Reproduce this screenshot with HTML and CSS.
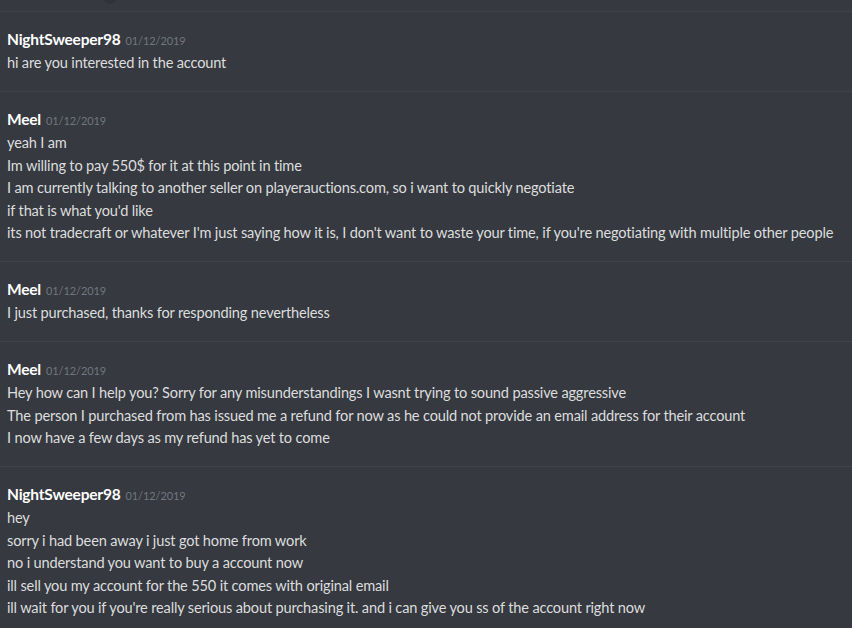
FILE: index.html
```html
<!DOCTYPE html>
<html lang="en">
<head>
<meta charset="utf-8">
<title>Chat</title>
<link rel="stylesheet" href="styles.css">
</head>
<body>
<div class="chat">
  <div class="top-fade"><span class="top-dot"></span></div>
  <div class="group">
    <div class="header"><span class="name">NightSweeper98</span><span class="time">01/12/2019</span></div>
    <div class="line">hi are you interested in the account</div>
  </div>
  <div class="group">
    <div class="header"><span class="name">Meel</span><span class="time">01/12/2019</span></div>
    <div class="line">yeah I am</div>
    <div class="line">Im willing to pay 550$ for it at this point in time</div>
    <div class="line">I am currently talking to another seller on playerauctions.com, so i want to quickly negotiate</div>
    <div class="line">if that is what you'd like</div>
    <div class="line">its not tradecraft or whatever I'm just saying how it is, I don't want to waste your time, if you're negotiating with multiple other people</div>
  </div>
  <div class="group">
    <div class="header"><span class="name">Meel</span><span class="time">01/12/2019</span></div>
    <div class="line">I just purchased, thanks for responding nevertheless</div>
  </div>
  <div class="group">
    <div class="header"><span class="name">Meel</span><span class="time">01/12/2019</span></div>
    <div class="line">Hey how can I help you? Sorry for any misunderstandings I wasnt trying to sound passive aggressive</div>
    <div class="line">The person I purchased from has issued me a refund for now as he could not provide an email address for their account</div>
    <div class="line">I now have a few days as my refund has yet to come</div>
  </div>
  <div class="group">
    <div class="header"><span class="name">NightSweeper98</span><span class="time">01/12/2019</span></div>
    <div class="line">hey</div>
    <div class="line">sorry i had been away i just got home from work</div>
    <div class="line">no i understand you want to buy a account now</div>
    <div class="line">ill sell you my account for the 550 it comes with original email</div>
    <div class="line">ill wait for you if you're really serious about purchasing it. and i can give you ss of the account right now</div>
  </div>
</div>
</body>
</html>
```
FILE: styles.css
```css
html, body {
  margin: 0;
  padding: 0;
  background: #36393f;
  height: 100%;
  overflow: hidden;
}
.chat {
  font-family: Lato, "Liberation Sans", sans-serif;
  color: #dcddde;
  display: flex;
  flex-direction: column;
}
.top-fade {
  height: 11px;
  position: relative;
}
.top-dot {
  position: absolute;
  left: 104px;
  top: -8px;
  width: 12px;
  height: 12px;
  border-radius: 50%;
  background: #303338;
}
.group {
  border-top: 1px solid #40434a;
  padding: 16px 7px 16.5px;
}
.header {
  height: 22px;
  margin-bottom: 2px;
  display: flex;
  align-items: baseline;
  line-height: 22px;
}
.name {
  color: #ffffff;
  font-weight: 700;
  font-size: 15.5px;
  letter-spacing: -0.2px;
}
.time {
  color: #72767d;
  font-size: 11px;
  letter-spacing: -0.1px;
  margin-left: 5px;
}
.line {
  font-size: 14.6px;
  letter-spacing: -0.17px;
  line-height: 22.5px;
  white-space: nowrap;
}
```
